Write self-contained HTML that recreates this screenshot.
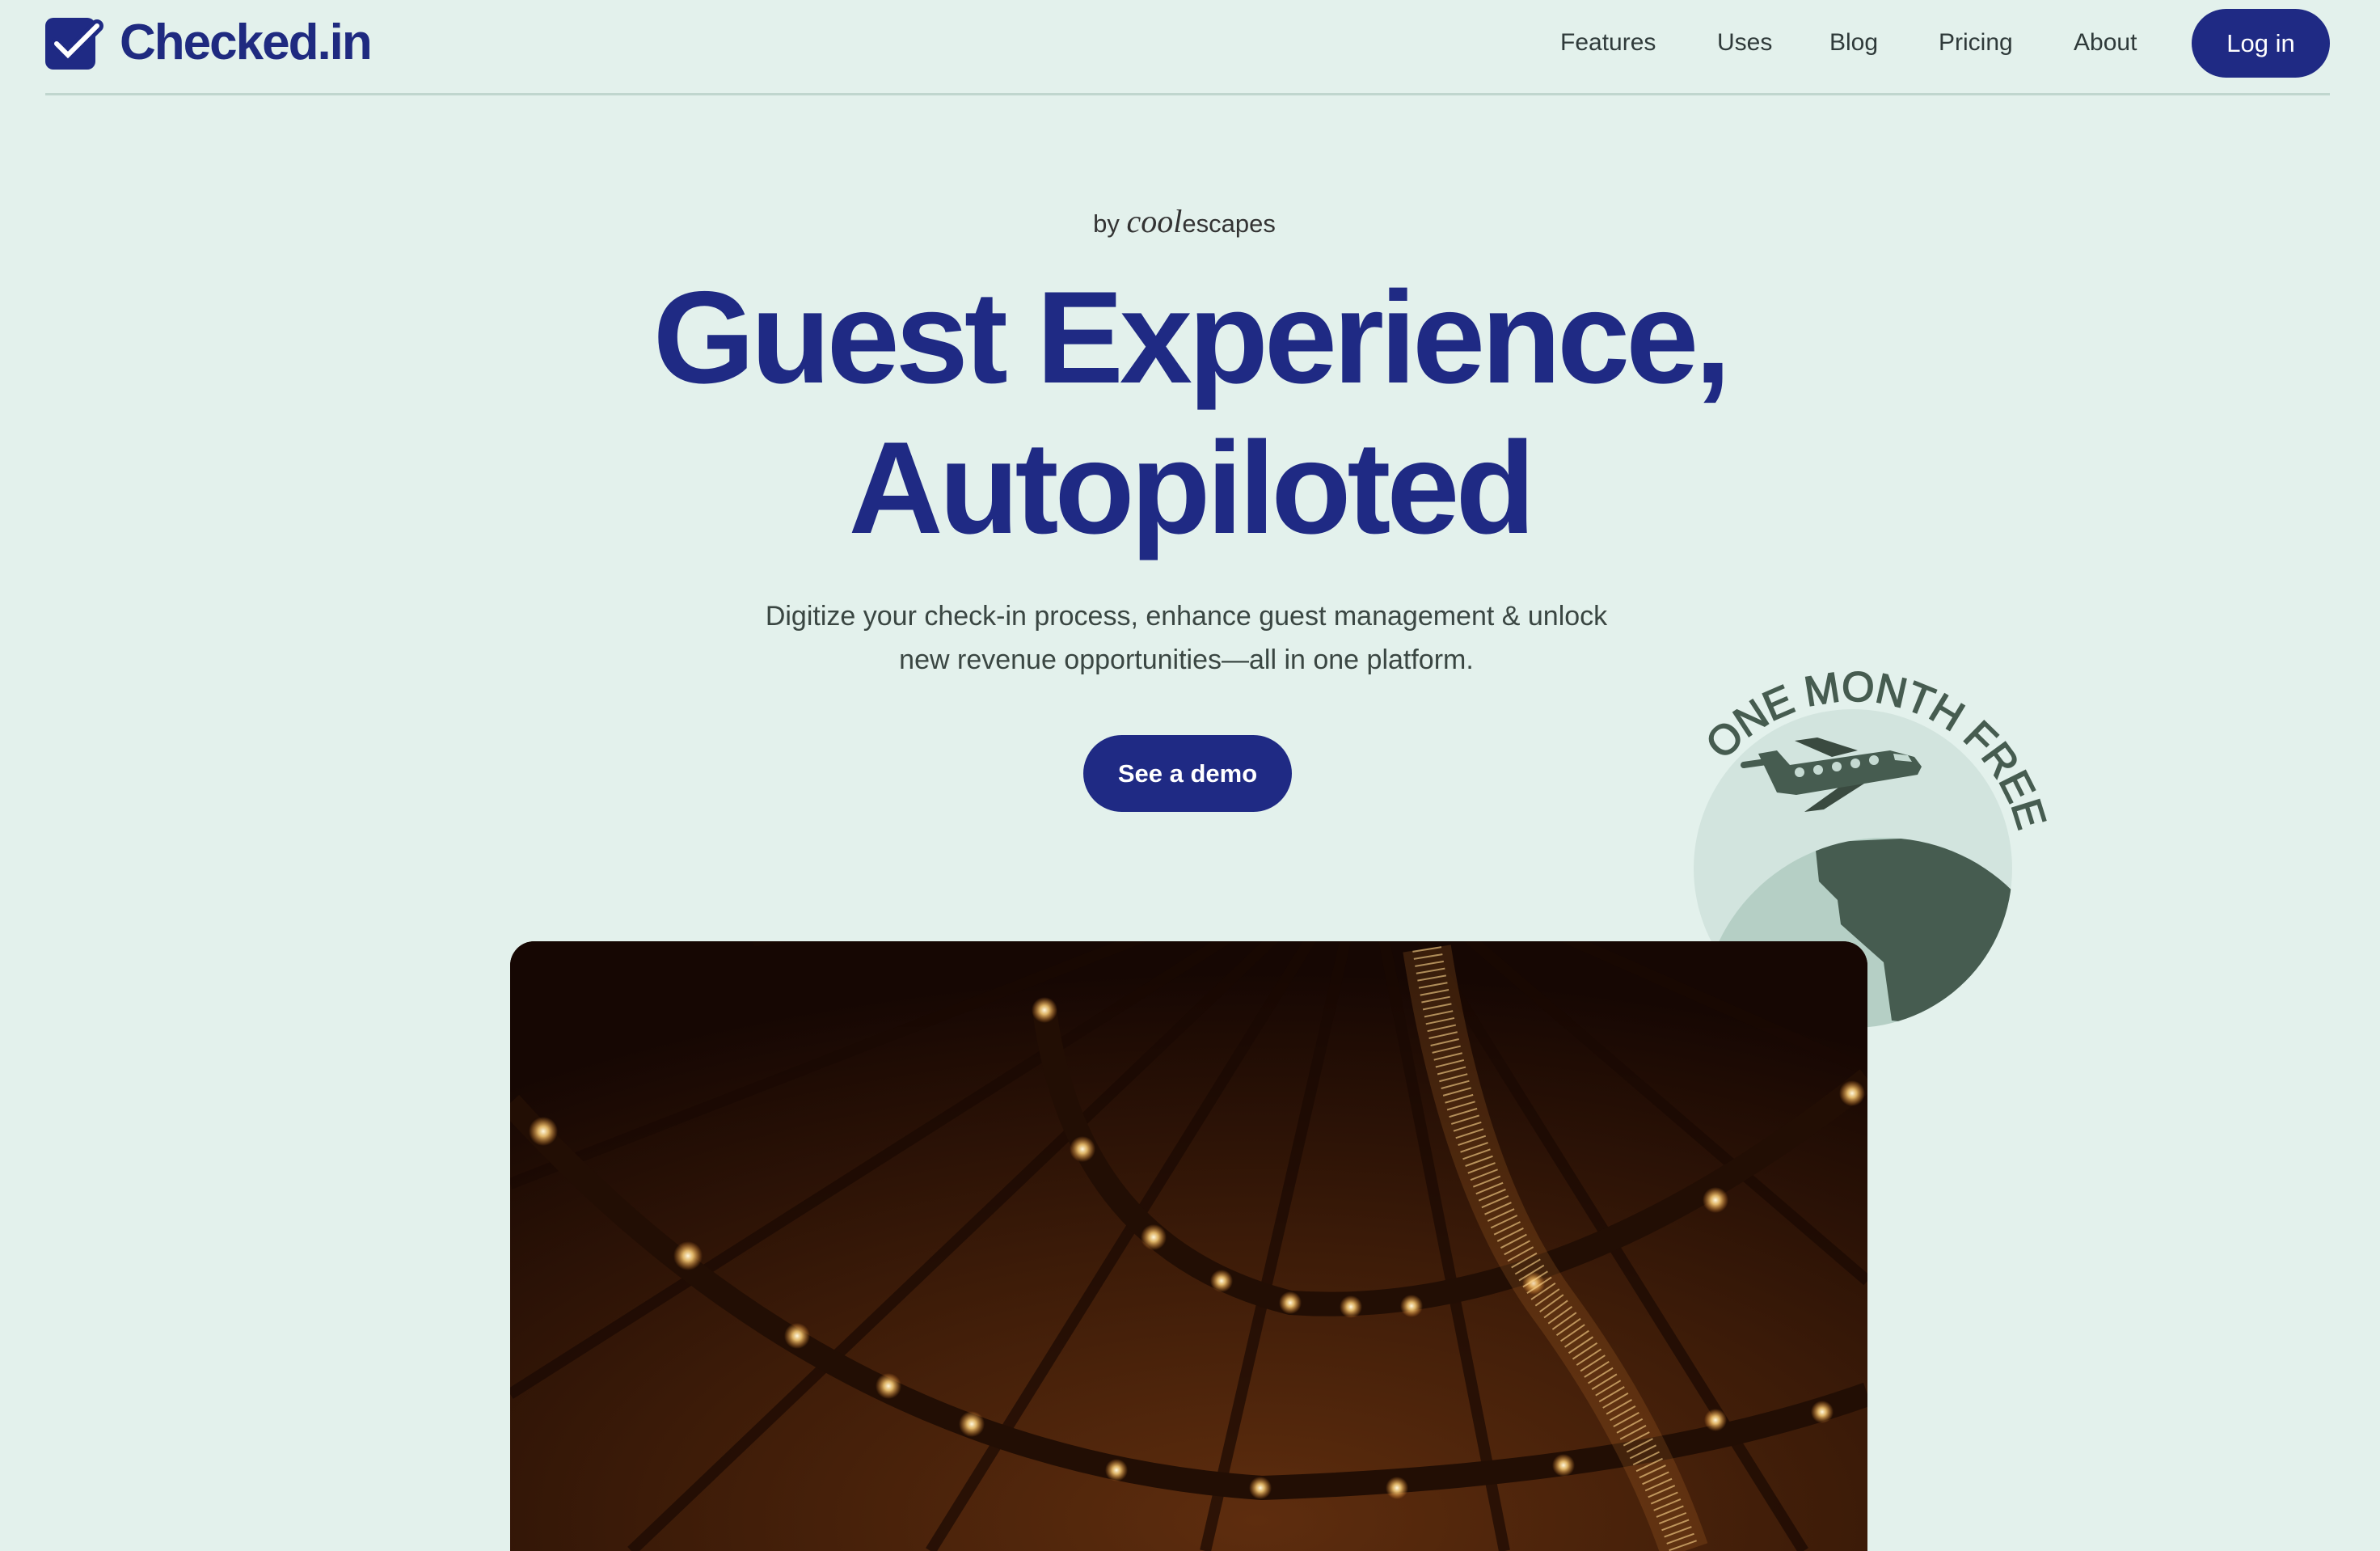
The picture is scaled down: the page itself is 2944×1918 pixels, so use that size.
<!DOCTYPE html>
<html><head><meta charset="utf-8"><style>
*{margin:0;padding:0;box-sizing:border-box}
html,body{width:2944px;height:1918px;overflow:hidden;background:#e3f1ec;font-family:"Liberation Sans",sans-serif}
.logo{position:absolute;left:56px;top:20px;display:flex;align-items:center}
.logo .t{font-weight:bold;font-size:62px;color:#1f2a80;letter-spacing:-2px;margin-left:16px;line-height:1}
.hr{position:absolute;left:56px;top:115px;width:2826px;height:3px;background:#c0d6ce}
.nav{position:absolute;top:36px;font-size:30px;color:#2f3a3a}
.login{position:absolute;left:2711px;top:11px;width:171px;height:85px;border-radius:43px;background:#1f2a84;color:#fff;font-size:31px;display:flex;align-items:center;justify-content:center}
.by{position:absolute;left:0;width:2930px;top:250px;text-align:center;font-size:31px;color:#333}
.by i{font-family:"Liberation Serif",serif;font-size:40px;color:#333}
h1{position:absolute;left:0;width:2944px;top:325px;text-align:center;font-size:162px;line-height:186px;color:#1f2a84;font-weight:bold;letter-spacing:-5px}
.sub{position:absolute;left:0;width:2935px;top:735px;text-align:center;font-size:34px;line-height:54px;color:#3a4642}
.demo{position:absolute;left:1340px;top:909px;width:258px;height:95px;border-radius:48px;background:#1f2a84;color:#fff;font-size:31px;display:flex;align-items:center;justify-content:center;font-weight:bold}
.badge{position:absolute;left:2080px;top:780px}
.img{position:absolute;left:631px;top:1164px;width:1679px;height:754px;border-radius:30px 30px 0 0;overflow:hidden;background:#2a1206}
</style></head><body>
<div class="logo"><svg width="76" height="66" viewBox="0 0 76 66"><rect x="0" y="2" width="62" height="64" rx="10" fill="#1f2a84"/><path d="M14 34 L28 48 L64 12" stroke="#1f2a84" stroke-width="16" fill="none" stroke-linecap="round"/><path d="M14 34 L28 48 L64 12" stroke="#fff" stroke-width="6" fill="none" stroke-linecap="round"/></svg><span class="t">Checked.in</span></div>
<div class="nav" style="left:1930px">Features</div>
<div class="nav" style="left:2124px">Uses</div>
<div class="nav" style="left:2263px">Blog</div>
<div class="nav" style="left:2398px">Pricing</div>
<div class="nav" style="left:2565px">About</div>
<div class="login">Log in</div>
<div class="hr"></div>
<div class="by">by <i>cool</i>escapes</div>
<h1>Guest Experience,<br>Autopiloted</h1>
<div class="sub">Digitize your check-in process, enhance guest management &amp; unlock<br>new revenue opportunities—all in one platform.</div>
<div class="demo">See a demo</div>
<svg class="badge" width="480" height="500" viewBox="0 0 480 500">
<defs><clipPath id="bc"><circle cx="212" cy="294" r="197"/></clipPath><clipPath id="gc"><circle cx="250" cy="482" r="226"/></clipPath>
<path id="arc" d="M52 162 A210 210 0 0 1 420 262"/></defs>
<circle cx="212" cy="294" r="197" fill="#d2e4de"/>
<g clip-path="url(#bc)"><circle cx="250" cy="482" r="226" fill="#b5cfc5"/>
<g clip-path="url(#gc)"><path d="M165 262 L420 250 L420 500 L260 482 L250 410 L197 363 L193 333 L170 310 Z" fill="#465c50"/></g></g>
<line x1="77" y1="166" x2="112" y2="161" stroke="#465c50" stroke-width="8" stroke-linecap="round"/>
<path d="M140 136 L168 132 L218 148 L186 156 Z" fill="#3a4a40"/>
<path d="M152 224 L176 221 L240 180 L208 184 Z" fill="#3a4a40"/>
<path d="M95 152 L118 148 L134 166 L258 148 L288 156 L297 168 L292 178 L142 203 L118 200 Z" fill="#465c50"/>
<g fill="#c5dad2"><circle cx="146" cy="175" r="6"/><circle cx="169" cy="172" r="6"/><circle cx="192" cy="168" r="6"/><circle cx="215" cy="164" r="6"/><circle cx="238" cy="160" r="6"/><path d="M262 152 L280 154 L285 162 L264 160 Z"/></g>
<text font-family="Liberation Sans,sans-serif" font-size="52" fill="#465c50" stroke="#465c50" stroke-width="1.5" letter-spacing="6"><textPath href="#arc" textLength="470" lengthAdjust="spacing">ONE MONTH FREE</textPath></text>
</svg>
<div class="img"><svg width="1679" height="754" viewBox="0 0 1679 754">
<defs><radialGradient id="bg" cx="0.55" cy="0.95" r="0.9"><stop offset="0" stop-color="#5e2d0e"/><stop offset="0.5" stop-color="#3c1b08"/><stop offset="1" stop-color="#160703"/></radialGradient>
<radialGradient id="gl"><stop offset="0" stop-color="#fff8e0"/><stop offset="0.35" stop-color="#ffd27a" stop-opacity="0.85"/><stop offset="1" stop-color="#ff9a30" stop-opacity="0"/></radialGradient></defs>
<rect width="1679" height="754" fill="url(#bg)"/>
<g stroke="#1a0903" stroke-width="14" opacity="0.7">
<line x1="1059" y1="-113" x2="0" y2="300"/><line x1="1059" y1="-113" x2="0" y2="560"/><line x1="1059" y1="-113" x2="150" y2="754"/><line x1="1059" y1="-113" x2="520" y2="754"/><line x1="1059" y1="-113" x2="860" y2="754"/><line x1="1059" y1="-113" x2="1230" y2="754"/><line x1="1059" y1="-113" x2="1600" y2="754"/><line x1="1059" y1="-113" x2="1679" y2="420"/><line x1="1059" y1="-113" x2="1679" y2="160"/><line x1="1059" y1="-113" x2="300" y2="0"/></g>
<path d="M661 85 Q700 380 965 447 Q1300 470 1679 170" stroke="#220e04" stroke-width="30" fill="none"/>
<path d="M0 200 Q400 640 930 676 Q1400 660 1679 560" stroke="#220e04" stroke-width="30" fill="none"/>
<g fill="url(#gl)">
<circle cx="661" cy="85" r="16"/><circle cx="708" cy="257" r="16"/><circle cx="796" cy="366" r="16"/><circle cx="880" cy="420" r="14"/><circle cx="965" cy="447" r="14"/><circle cx="1040" cy="452" r="14"/><circle cx="1115" cy="451" r="14"/><circle cx="1266" cy="423" r="14"/><circle cx="1491" cy="320" r="16"/><circle cx="1660" cy="188" r="16"/>
<circle cx="41" cy="235" r="18"/><circle cx="220" cy="389" r="18"/><circle cx="355" cy="488" r="16"/><circle cx="468" cy="550" r="16"/><circle cx="571" cy="597" r="16"/><circle cx="750" cy="654" r="14"/><circle cx="928" cy="676" r="14"/><circle cx="1097" cy="676" r="14"/><circle cx="1303" cy="648" r="14"/><circle cx="1491" cy="592" r="14"/><circle cx="1623" cy="582" r="14"/></g>
<path d="M1134 9 Q1180 300 1290 450 Q1400 600 1453 754" stroke="#c8782c" stroke-width="60" fill="none" opacity="0.2"/>
<path d="M1134 9 Q1180 300 1290 450 Q1400 600 1453 754" stroke="#ffd890" stroke-width="36" fill="none" stroke-dasharray="2 7" opacity="0.6"/>
</svg></div>
</body></html>
